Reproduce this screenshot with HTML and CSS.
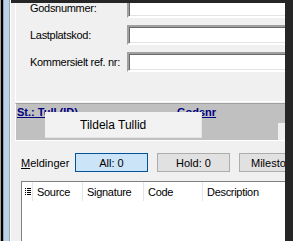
FILE: index.html
```html
<!DOCTYPE html>
<html lang="no">
<head>
  <meta charset="UTF-8" />
  <title>Gods</title>
  <link rel="stylesheet" href="styles.css">
</head>
<body>
  <div class="shell">
    <div class="sidebar"></div>
    <div class="main">
      <div class="form-panel">
        <div class="rows">
          <div class="row"><label>Godsnummer:</label><div class="textbox"></div></div>
          <div class="row"><label>Lastplatskod:</label><div class="textbox"></div></div>
          <div class="row"><label>Kommersielt ref. nr:</label><div class="textbox"></div></div>
        </div>
      </div>

      <div class="grid">
        <div class="grid-cols">
          <a class="col-head col-tull">St.: Tull (ID)</a>
          <a class="col-head">Godsnr</a>
        </div>
        <div class="corner"></div>
        <div class="popup">Tildela Tullid</div>
      </div>

      <div class="tabs">
        <span class="tab-label"><u>M</u>eldinger</span>
        <button class="tab-btn active">All: 0</button>
        <button class="tab-btn">Hold: 0</button>
        <button class="tab-btn">Milestone: 0</button>
      </div>

      <div class="listview">
        <div class="lv-head">
          <div class="lv-col lv-icon">
            <svg width="6" height="8" viewBox="0 0 6 8">
              <rect x="0" y="0" width="1" height="1" fill="#000"/><rect x="2" y="0" width="4" height="1" fill="#000"/>
              <rect x="0" y="2" width="1" height="1" fill="#000"/><rect x="2" y="2" width="4" height="1" fill="#000"/>
              <rect x="0" y="4" width="1" height="1" fill="#000"/><rect x="2" y="4" width="4" height="1" fill="#000"/>
              <rect x="0" y="6" width="1" height="1" fill="#000"/><rect x="2" y="6" width="4" height="1" fill="#000"/>
            </svg>
          </div>
          <div class="lv-col w-source">Source</div>
          <div class="lv-col w-sig">Signature</div>
          <div class="lv-col w-code">Code</div>
          <div class="lv-col w-desc">Description</div>
        </div>
      </div>
    </div>
  </div>
</body>
</html>
```

FILE: styles.css
```css
body {
  margin: 0;
  background: #262626;
  font-family: 'Liberation Sans', Arial, sans-serif;
  font-size: 11px;
  overflow: hidden;
}
.shell {
  display: flex;
  width: 293px;
  height: 241px;
}
.sidebar {
  width: 11px;
  flex-shrink: 0;
  background: linear-gradient(to right,
    #a0a0a0 0, #a0a0a0 1px,
    #000 1px, #000 3px,
    #a0a0a0 3px, #a0a0a0 4px,
    #b9d1ea 4px, #b9d1ea 9px,
    #a0a0a0 9px, #a0a0a0 10px,
    #ffffff 10px, #ffffff 11px);
}
.main {
  flex: 1;
  margin-top: 3px;
  margin-right: 8px;
  background: #f0f0f0;
  overflow: hidden;
  display: flex;
  flex-direction: column;
}

/* top form */
.form-panel {
  margin-left: 4px;
  height: 98px;
  border-left: 1px solid #fff;
  border-bottom: 1px solid #fff;
  flex-shrink: 0;
}
.rows {
  margin-top: -5px;
  display: flex;
  flex-direction: column;
  gap: 7px;
}
.row {
  display: flex;
  align-items: center;
  height: 20px;
}
.row label {
  width: 97px;
  padding-left: 14px;
  flex-shrink: 0;
  letter-spacing: -0.3px;
  color: #000;
}
.textbox {
  flex: 1;
  height: 16px;
  margin-right: -4px;
  background: #fff;
  border: 2px solid;
  border-color: #a0a0a0 #fff #fff #a0a0a0;
  box-shadow: inset 1px 1px 0 #696969, inset -1px -1px 0 #e3e3e3;
}

/* grid */
.grid {
  position: relative;
  margin: 1px 0 0 4px;
  height: 36px;
  border-top: 1px solid #a0a0a0;
  border-left: 1px solid #fff;
  border-bottom: 1px solid #fff;
  background: #c0c0c0;
  display: flex;
  flex-shrink: 0;
}
.grid-cols {
  flex: 1;
  display: flex;
  align-items: flex-start;
}
.col-head {
  font-weight: bold;
  color: #000080;
  text-decoration: underline;
  line-height: 17px;
}
.col-tull {
  width: 160px;
  padding-left: 1px;
}
.corner {
  width: 7px;
  height: 17px;
  align-self: flex-end;
  background: #f0f0f0;
}
.popup {
  position: absolute;
  left: 29px;
  top: 8px;
  width: 155px;
  height: 26px;
  background: #f2f2f2;
  border-right: 1px solid #e4e4e4;
  border-bottom: 1px solid #e4e4e4;
  font-size: 12px;
  line-height: 26px;
  padding-left: 35px;
  box-sizing: border-box;
  width: 157px;
  color: #000;
}

/* tabs */
.tabs {
  display: flex;
  align-items: center;
  margin-top: 12px;
  padding-left: 10px;
  height: 19px;
  flex-shrink: 0;
}
.tab-label {
  width: 54px;
  flex-shrink: 0;
}
.tab-btn {
  width: 73px;
  height: 19px;
  flex-shrink: 0;
  margin-right: 9px;
  padding: 0;
  font-family: inherit;
  font-size: 11px;
  background: #e1e1e1;
  border: 1px solid #adadad;
  color: #000;
}
.tab-btn.active {
  background: #cce4f7;
  border-color: #005499;
}
.tab-btn:last-child {
  width: 90px;
  text-align: left;
  padding-left: 11px;
}

/* list */
.listview {
  margin: 9px -4px 0 10px;
  flex: 1;
  background: #fff;
  border-top: 1px solid #828282;
  border-left: 1px solid #828282;
}
.lv-head {
  display: flex;
  height: 19px;
}
.lv-col {
  box-sizing: border-box;
  height: 19px;
  line-height: 20px;
  padding-left: 4px;
  border-right: 1px solid #e5e5e5;
  font-size: 11px;
  letter-spacing: -0.3px;
  color: #000;
  flex-shrink: 0;
}
.lv-icon {
  width: 11px;
  padding-left: 3px;
  padding-top: 6px;
  line-height: 0;
}
.w-source { width: 50px; }
.w-sig { width: 61px; }
.w-code { width: 59px; }
.w-desc { width: 100px; border-right: none; }
```
